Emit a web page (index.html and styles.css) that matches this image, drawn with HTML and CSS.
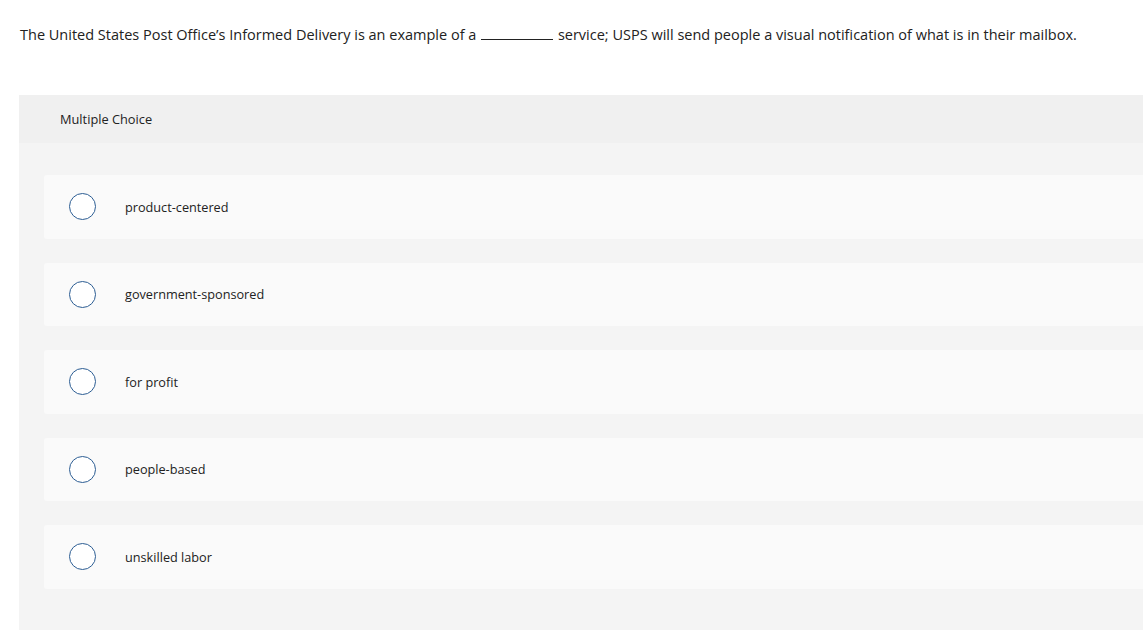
FILE: index.html
```html
<!DOCTYPE html>
<html>
<head>
<meta charset="utf-8">
<link rel="stylesheet" href="styles.css">
</head>
<body>
<div class="page">
  <p class="question">The United States Post Office’s Informed Delivery is an example of a <span class="blank"></span> service; USPS will send people a visual notification of what is in their mailbox.</p>
  <div class="panel">
    <div class="panel-head">Multiple Choice</div>
    <div class="options">
      <div class="option"><span class="radio"></span><span class="label">product-centered</span></div>
      <div class="option"><span class="radio"></span><span class="label">government-sponsored</span></div>
      <div class="option"><span class="radio"></span><span class="label">for profit</span></div>
      <div class="option"><span class="radio"></span><span class="label">people-based</span></div>
      <div class="option"><span class="radio"></span><span class="label">unskilled labor</span></div>
    </div>
  </div>
</div>
</body>
</html>
```

FILE: styles.css
```css
html, body {
  margin: 0;
  padding: 0;
  background: #ffffff;
}
body {
  font-family: "Open Sans", "Liberation Sans", sans-serif;
  color: #1a1a1a;
  overflow: hidden;
}
.page {
  padding: 0 0 0 19px;
}
.question {
  margin: 0;
  padding: 25px 0 0 1px;
  height: 95px;
  box-sizing: border-box;
  font-size: 14.5px;
  line-height: 20px;
  color: #222;
  white-space: nowrap;
}
.blank {
  display: inline-block;
  width: 72px;
  border-bottom: 1px solid #222;
  vertical-align: baseline;
  margin: 0 1px;
}
.panel {
  background: #f4f4f4;
  margin-right: -20px;
  height: 560px;
}
.panel-head {
  background: #f0f0f0;
  height: 48px;
  padding-left: 41px;
  display: flex;
  align-items: center;
  font-size: 12.8px;
  color: #222;
}
.options {
  padding: 32px 0 0 25px;
  display: flex;
  flex-direction: column;
  gap: 24px;
}
.option {
  background: #fafafa;
  height: 63.5px;
  border-radius: 3px 0 0 3px;
  display: flex;
  align-items: center;
  padding-left: 25px;
}
.radio {
  width: 25px;
  height: 25px;
  border: 1.5px solid #2c5d93;
  border-radius: 50%;
  background: #fff;
  flex: none;
}
.label {
  margin-left: 29px;
  font-size: 12.7px;
  color: #222;
}
```
